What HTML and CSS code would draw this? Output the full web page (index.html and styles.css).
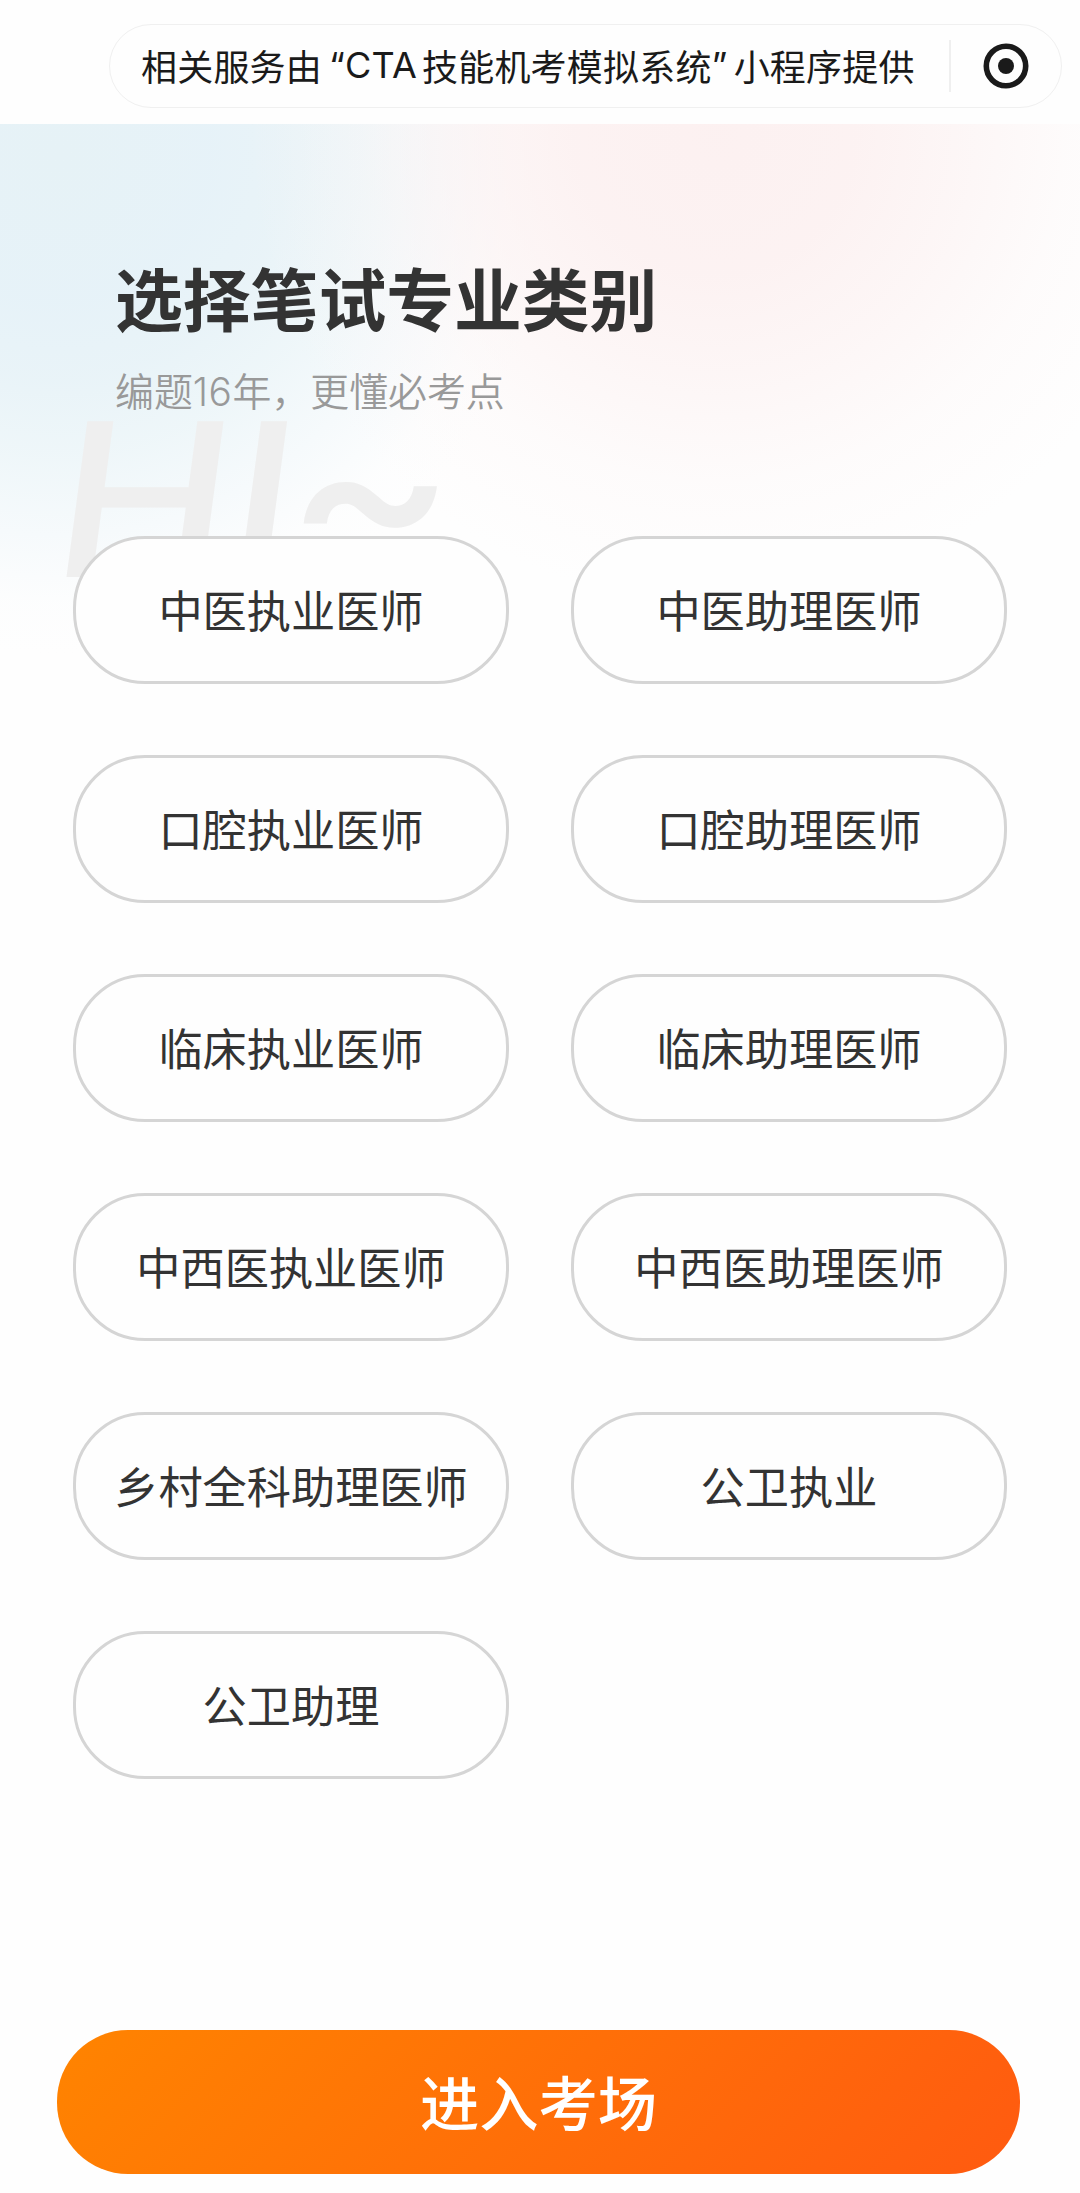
FILE: index.html
```
<!DOCTYPE html>
<html lang="zh-CN">
<head>
    <meta charset="UTF-8">
    <meta name="viewport" content="width=device-width, initial-scale=1.0">
    <title>选择笔试专业类别</title>
    <link rel="stylesheet" href="styles.css">
</head>
<body>
    <header class="topbar">
        <div class="capsule">
            <p class="provider"><span>相关服务由</span><span class="app-prefix">“CTA</span><span>技能机考模拟系统</span><span class="quote-end">”</span><span>小程序提供</span></p>
            <span class="divider"></span>
            <svg class="target" viewBox="0 0 46 46">
                <circle cx="23" cy="23" r="19.7" fill="none" stroke="#1a1a1a" stroke-width="5.6"/>
                <circle cx="23" cy="23" r="8" fill="#1a1a1a"/>
            </svg>
        </div>
    </header>

    <main class="content">
        <div class="heading">
            <h1>选择笔试专业类别</h1>
            <p class="subtitle">编题<span class="num">16</span>年，更懂必考点</p>
            <div class="hi">HI<span class="tilde">~</span></div>
        </div>

        <div class="options">
            <button>中医执业医师</button>
            <button>中医助理医师</button>
            <button>口腔执业医师</button>
            <button>口腔助理医师</button>
            <button>临床执业医师</button>
            <button>临床助理医师</button>
            <button>中西医执业医师</button>
            <button>中西医助理医师</button>
            <button>乡村全科助理医师</button>
            <button>公卫执业</button>
            <button>公卫助理</button>
        </div>

        <button class="enter">进入考场</button>
    </main>
</body>
</html>
```
FILE: styles.css
```
* {
    margin: 0;
    padding: 0;
    box-sizing: border-box;
}

body {
    font-family: "Noto Sans CJK SC", sans-serif;
    background: #fefefe;
    min-height: 100vh;
    display: flex;
    flex-direction: column;
    color: #333;
}

/* Top bar */
.topbar {
    height: 124px;
    padding: 24px 18px 0 109px;
    background: #fefefe;
}

.capsule {
    height: 84px;
    padding: 0 32px 0 31px;
    display: flex;
    align-items: center;
    border: 1px solid #f0f0f0;
    border-radius: 42px;
}

.provider {
    display: flex;
    font-size: 36px;
    line-height: 52px;
    letter-spacing: 0.2px;
    color: #1a1a1a;
    white-space: nowrap;
    padding-bottom: 3px;
}

.app-prefix {
    font-family: Inter, sans-serif;
    margin: 0 5px 0 7px;
}

.quote-end {
    font-family: Inter, sans-serif;
    margin-right: 6px;
}

.divider {
    width: 2px;
    height: 52px;
    margin-left: auto;
    background: #efefef;
}

.target {
    width: 46px;
    height: 46px;
    margin-left: 32px;
}

/* Page content */
.content {
    flex: 1;
    padding: 124px 57px 19px;
    display: flex;
    flex-direction: column;
    background:
        radial-gradient(circle 470px at 715px 10px, rgba(252, 240, 240, 0.95) 0%, rgba(252, 240, 240, 0.85) 30%, rgba(252, 241, 241, 0.6) 52%, rgba(252, 243, 243, 0.25) 75%, rgba(254, 254, 254, 0) 100%),
        radial-gradient(circle 500px at 60px 30px, #e6f2f6 0%, rgba(230, 242, 248, 0.98) 30%, rgba(230, 242, 247, 0.88) 45%, rgba(231, 243, 247, 0.68) 60%, rgba(234, 244, 249, 0.38) 77%, rgba(242, 248, 251, 0.12) 90%, rgba(254, 254, 254, 0) 100%),
        #fefefe;
}

.heading {
    position: relative;
    height: 287.5px;
    padding-left: 58px;
}

h1 {
    font-size: 67.8px;
    line-height: 98px;
    font-weight: 700;
}

.subtitle {
    font-size: 38.9px;
    line-height: 56px;
    margin-top: 15px;
    font-weight: 350;
    color: #999;
}

.num {
    font-family: Inter, sans-serif;
    letter-spacing: 0.5px;
}

/* Greeting tucked behind the first option */
.hi {
    position: absolute;
    left: 1px;
    top: 122px;
    font-family: Inter, sans-serif;
    font-size: 214px;
    line-height: 260px;
    font-weight: 550;
    color: #efefef;
    transform: skewX(-7.6deg) scaleX(1.09);
    transform-origin: left center;
    white-space: nowrap;
}

.tilde {
    font-size: 232px;
    line-height: 0;
    font-weight: 550;
    vertical-align: 5px;
    margin-left: -8px;
}

.options {
    position: relative;
    display: grid;
    grid-template-columns: 436px 436px;
    grid-auto-rows: 148.5px;
    gap: 70.6px 62px;
    padding-left: 16px;
}

.options button {
    font-family: inherit;
    font-size: 44.2px;
    padding-bottom: 2px;
    color: #333;
    background: #fefefe;
    border: 3px solid #d5d5d5;
    border-radius: 72px;
    cursor: pointer;
}

.enter {
    height: 144px;
    width: 963px;
    margin-top: auto;
    padding-bottom: 4px;
    font-family: inherit;
    font-size: 59.3px;
    font-weight: 500;
    color: #fff;
    background: linear-gradient(135deg, #ff8400, #ff5a10);
    border: none;
    border-radius: 71px;
    cursor: pointer;
}
```
